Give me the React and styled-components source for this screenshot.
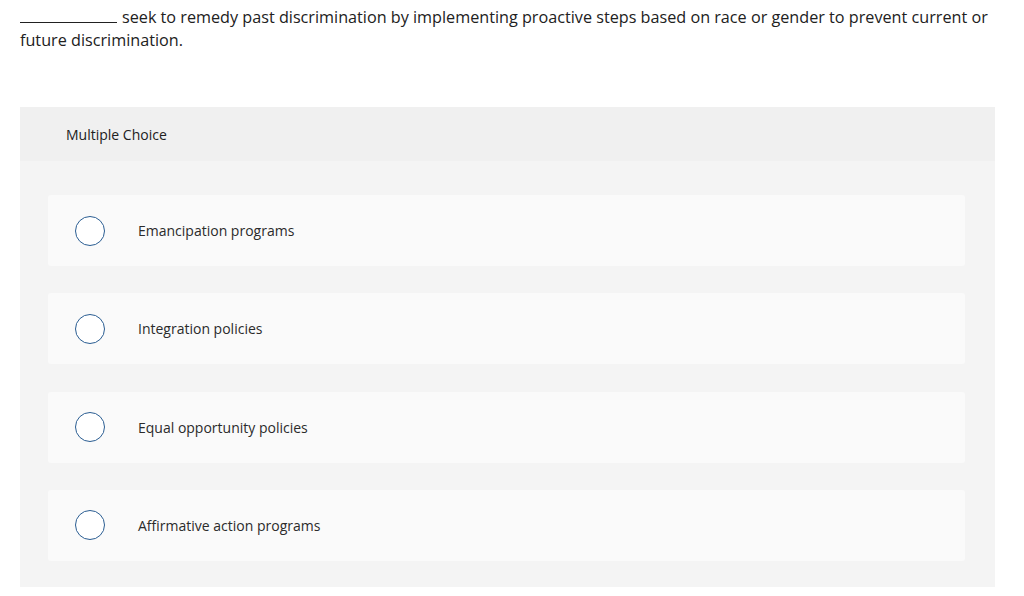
import React from "react";
import styled, { createGlobalStyle } from "styled-components";

const GlobalStyle = createGlobalStyle`
  body {
    margin: 0;
    background: #fff;
    font-family: "Open Sans", "Lato", sans-serif;
    color: #212121;
  }
`;

const Page = styled.div`
  padding: 6px 29px 0 20px;
`;

const Prompt = styled.p`
  margin: 0;
  font-size: 16.2px;
  line-height: 23px;
  color: #212121;
`;

const Blank = styled.span`
  display: inline-block;
  width: 97px;
  border-bottom: 1px solid #212121;
  margin-right: 5px;
  height: 16px;
  vertical-align: baseline;
`;

const Panel = styled.section`
  margin-top: 55px;
  background: #f4f4f4;
  padding-bottom: 26px;
`;

const PanelHeader = styled.div`
  height: 54px;
  background: #f0f0f0;
  display: flex;
  align-items: center;
  padding-left: 46px;
  font-size: 14px;
  color: #212121;
`;

const Choices = styled.div`
  display: flex;
  flex-direction: column;
  gap: 27.33px;
  padding: 34px 30px 0 28px;
`;

const Choice = styled.label`
  height: 71px;
  background: #fafafa;
  border-radius: 3px;
  display: flex;
  align-items: center;
  padding-left: 27px;
  cursor: pointer;
`;

const Radio = styled.span`
  width: 30px;
  height: 30px;
  box-sizing: border-box;
  border-radius: 50%;
  border: 1.5px solid #2a5d92;
  background: #fff;
  flex-shrink: 0;
`;

const ChoiceText = styled.span`
  margin-left: 33px;
  font-size: 14px;
  color: #2b2b2b;
`;

const options = [
  "Emancipation programs",
  "Integration policies",
  "Equal opportunity policies",
  "Affirmative action programs",
];

export default function App() {
  return (
    <>
      <GlobalStyle />
      <Page>
        <Prompt>
          <Blank />
          seek to remedy past discrimination by implementing proactive steps
          based on race or gender to prevent current or future discrimination.
        </Prompt>
        <Panel>
          <PanelHeader>Multiple Choice</PanelHeader>
          <Choices>
            {options.map((o) => (
              <Choice key={o}>
                <Radio />
                <ChoiceText>{o}</ChoiceText>
              </Choice>
            ))}
          </Choices>
        </Panel>
      </Page>
    </>
  );
}
